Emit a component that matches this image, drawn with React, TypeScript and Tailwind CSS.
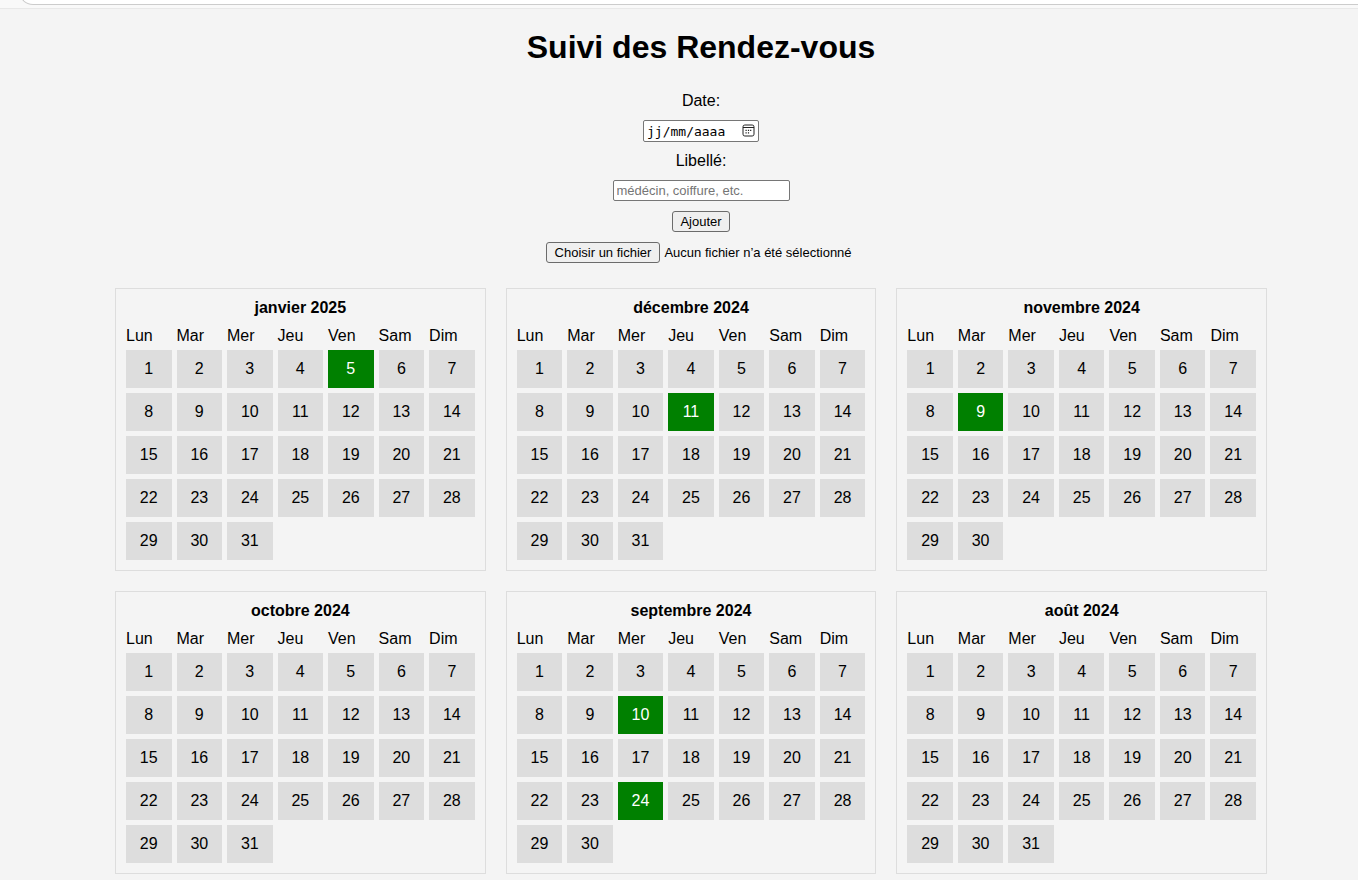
import { useId } from "react";

interface Month {
  name: string;
  days: number;
  booked: number[];
}

const WEEKDAYS = ["Lun", "Mar", "Mer", "Jeu", "Ven", "Sam", "Dim"];

const MONTHS: Month[] = [
  { name: "janvier 2025", days: 31, booked: [5] },
  { name: "décembre 2024", days: 31, booked: [11] },
  { name: "novembre 2024", days: 30, booked: [9] },
  { name: "octobre 2024", days: 31, booked: [] },
  { name: "septembre 2024", days: 30, booked: [10, 24] },
  { name: "août 2024", days: 31, booked: [] },
];

function weeksOf(days: number): number[][] {
  const weeks: number[][] = [];
  for (let start = 1; start <= days; start += 7) {
    const length = Math.min(7, days - start + 1);
    weeks.push(Array.from({ length }, (_, i) => start + i));
  }
  return weeks;
}

function MonthCard({ month }: { month: Month }) {
  return (
    <section className="border border-[#dddddd] px-[5px] pt-[10px] pb-[5px]">
      <table className="w-full table-fixed border-separate border-spacing-[5px]">
        <caption className="mb-[5px] font-bold">{month.name}</caption>
        <thead>
          <tr>
            {WEEKDAYS.map((day) => (
              <th key={day} scope="col" className="p-0 text-left font-normal">
                {day}
              </th>
            ))}
          </tr>
        </thead>
        <tbody>
          {weeksOf(month.days).map((week) => (
            <tr key={week[0]}>
              {week.map((day) => (
                <td
                  key={day}
                  className={
                    month.booked.includes(day)
                      ? "bg-[#008000] p-[10px] text-center text-white"
                      : "bg-[#dddddd] p-[10px] text-center"
                  }
                >
                  {day}
                </td>
              ))}
            </tr>
          ))}
        </tbody>
      </table>
    </section>
  );
}

function CalendarIcon() {
  return (
    <svg width="13" height="13" viewBox="0 0 13 13" fill="none" stroke="#222222" aria-hidden="true">
      <rect x="1" y="1" width="11" height="11" rx="1.8" />
      <path d="M1 3.5H12" />
      <path
        d="M5.9 6.4H7.1M8.1 6.4H9.3M3.5 6.4H4.7M3.5 8.8H4.7M5.9 8.8H7.1"
        strokeWidth="1.2"
      />
    </svg>
  );
}

function AppointmentForm() {
  const dateId = useId();
  const labelId = useId();
  const fileId = useId();
  return (
    <form className="flex flex-col items-center gap-[10px]" onSubmit={(e) => e.preventDefault()}>
      <label htmlFor={dateId}>Date:</label>
      <div className="flex h-[22px] w-[116px] items-end rounded-[2px] border border-[#767676] bg-white pr-[3px] pl-[3px]">
        <input
          id={dateId}
          type="text"
          inputMode="numeric"
          placeholder="jj/mm/aaaa"
          className="min-w-0 flex-1 bg-transparent font-['DejaVu_Sans_Mono',monospace] text-[13px] leading-[18px] outline-none placeholder:text-black"
        />
        <button type="button" aria-label="Ouvrir le calendrier" className="self-start pt-[3px]">
          <CalendarIcon />
        </button>
      </div>
      <label htmlFor={labelId}>Libellé:</label>
      <input
        id={labelId}
        type="text"
        placeholder="médécin, coiffure, etc."
        className="h-[21px] w-[177px] rounded-[2px] border border-[#767676] bg-white px-[3px] text-[13px] placeholder:text-[#757575]"
      />
      <button
        type="submit"
        className="h-[21px] rounded-[3px] border border-[#6b6b6b] bg-[#efefef] px-[7px] text-[13px] leading-[19px]"
      >
        Ajouter
      </button>
      <div className="flex items-center gap-1 text-[13px] leading-[19px]">
        <input id={fileId} type="file" className="peer sr-only" />
        <label
          htmlFor={fileId}
          className="rounded-[3px] border border-[#6b6b6b] bg-[#efefef] px-2 peer-focus-visible:outline-2"
        >
          Choisir un fichier
        </label>
        <span className="min-w-[192px]">Aucun fichier n’a été sélectionné</span>
      </div>
    </form>
  );
}

export default function App() {
  return (
    <div className="min-h-screen bg-[#f4f4f4] font-['Liberation_Sans',Arial,sans-serif] text-[16px] leading-[18px] text-black">
      <div className="border-b border-[#e8e8e8] bg-[#f9f9f9] pb-[3px] pl-[19px]">
        <div className="flex h-[5px] items-end overflow-hidden">
          <div className="h-8 flex-1 shrink-0 rounded-bl-[14px] border-b border-l border-[#cccccc] bg-white" />
        </div>
      </div>
      <main className="pt-5 pl-11">
        <h1 className="mb-[27px] text-center text-[32px] leading-[36px] font-bold">Suivi des Rendez-vous</h1>
        <AppointmentForm />
        <div className="mx-auto mt-[25px] grid max-w-[1172px] grid-cols-3 gap-5 pr-5 pb-1">
          {MONTHS.map((month) => (
            <MonthCard key={month.name} month={month} />
          ))}
        </div>
      </main>
    </div>
  );
}
